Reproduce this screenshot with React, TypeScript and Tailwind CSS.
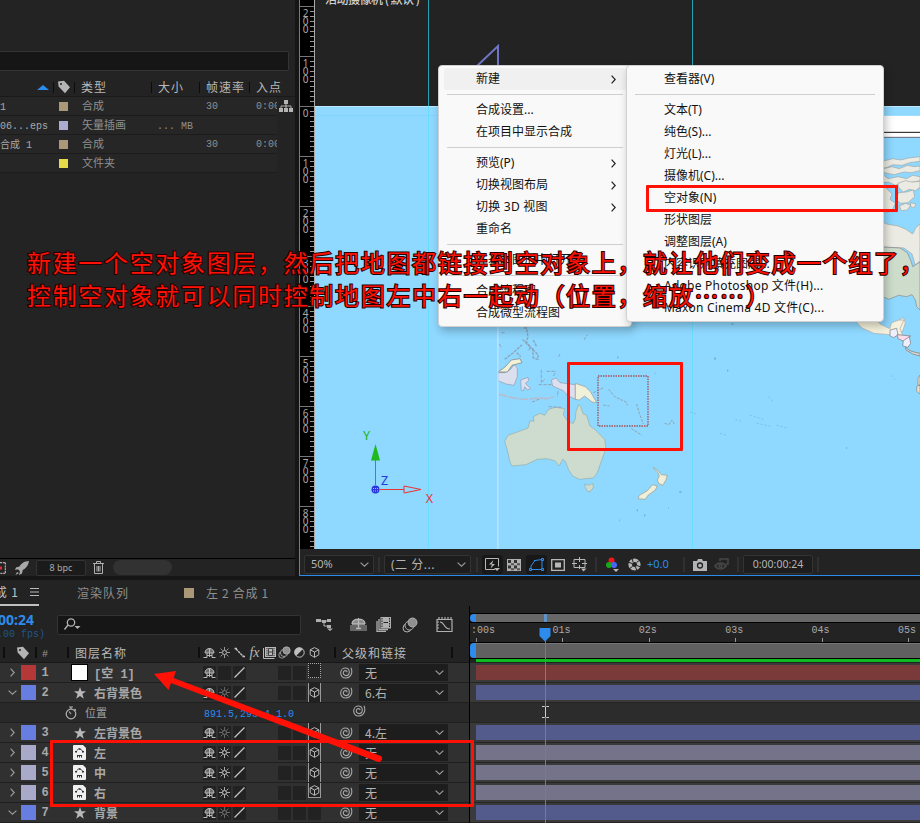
import React from "react";

const song = "font-['Liberation_Mono','Noto_Sans_CJK_SC',monospace]";
const ui = "font-['Noto_Sans','Noto_Sans_CJK_SC',sans-serif]";
const hei = "font-['Noto_Sans_CJK_SC',sans-serif]";

/* ---------- icons ---------- */

type IconProps = { className?: string };

const Tag = () => (
  <svg width="14" height="14" viewBox="0 0 14 14">
    <path d="M1 1.5 7 .8l6 6.4-5 6L1.6 6.5Z" fill="#b4b4b4" />
    <circle cx="4" cy="4" r="1" fill="#232323" />
  </svg>
);
const Shy = () => (
  <svg width="13" height="12" viewBox="0 0 13 12" className="shrink-0" fill="none" stroke="#b8b8b8">
    <path d="M2 6C2 0 11 0 11 6Z" fill="#6d6d6d" />
    <path d="M6.500 1v9M.5 10.500h3.500M4 8.500h5M9 10.500h3.500M4 10.500V6M9 10.500V6" />
  </svg>
);
const Sun = ({ className = "text-[#b8b8b8]" }: IconProps) => (
  <svg width="11" height="11" viewBox="0 0 11 11" fill="none" stroke="currentColor" className={className}>
    <circle cx="5.5" cy="5.5" r="2" />
    <path d="M5.5 0v3M5.5 8v3M0 5.5h3M8 5.5h3M1.6 1.6l2 2M7.4 7.4l2 2M9.4 1.6l-2 2M3.6 7.4l-2 2" strokeWidth=".8" />
  </svg>
);
const Slash = () => (
  <svg width="11" height="11" viewBox="0 0 11 11">
    <path d="M.5 10.5 10.5.5" stroke="#c4c4c4" strokeWidth="1.2" />
  </svg>
);
const BackSlash = () => (
  <svg width="11" height="11" viewBox="0 0 11 11">
    <path d="M.5 1.5h2.500M8.500 9.500h2.500M2 2l7.500 7.500" stroke="#c4c4c4" strokeWidth="1.4" strokeDasharray="2.500 .6" />
  </svg>
);
const Film = () => (
  <svg width="13" height="12" viewBox="0 0 13 12">
    <path d="M.5 1v10.500h11" stroke="#b8b8b8" fill="none" />
    <path d="M2 0h11v10H2Z" fill="#b8b8b8" />
    <path d="M4 1v8M11 1v8" stroke="#232323" strokeDasharray="1.300 1" />
    <path d="M5.500 5h4M5.500 1.500h4v7h-4Z" stroke="#232323" fill="none" strokeWidth=".8" />
  </svg>
);
const Blur = ({ className = "h-[13px] w-[13px]" }: IconProps) => (
  <svg viewBox="0 0 16 16" className={className} stroke="#b0b0b0" fill="#232323">
    <circle cx="5" cy="11" r="4" />
    <circle cx="7.500" cy="8.500" r="4.500" />
    <circle cx="10.500" cy="5.500" r="4.500" fill="#909090" />
  </svg>
);
const Adjust = () => (
  <svg width="11" height="11" viewBox="0 0 11 11">
    <circle cx="5.5" cy="5.5" r="4.700" stroke="#c0c0c0" fill="none" />
    <path d="M8.800 2.200A4.700 4.700 0 1 1 2.200 8.800Z" fill="#c0c0c0" transform="rotate(180 5.500 5.500)" />
  </svg>
);
const Cube = () => (
  <svg width="11" height="11" viewBox="0 0 11 11" fill="none" stroke="#b8b8b8" className="shrink-0">
    <path d="M5.500.6 9.800 2.800v5L5.500 10.300 1.200 7.800v-5ZM1.200 2.800 5.500 5l4.300-2.200M5.500 5v5.300" />
  </svg>
);
const Spiral = () => (
  <svg width="13" height="12" viewBox="0 0 13 12" fill="none" stroke="#a8a8a8" strokeWidth="1.100">
    <path d="M11 .8C13 5.500 11 10.800 6 11 2.500 11.200.6 8.800.7 5.800.8 2.800 3 1 5.400 1c2.400 0 4 1.800 3.900 4.200C9.200 7.400 7.800 8.700 6 8.600 4.300 8.500 3.200 7.300 3.300 5.700 3.400 4.300 4.400 3.500 5.500 3.600c1 .1 1.600.9 1.500 1.700" />
  </svg>
);
const Chevron = ({ className = "text-[#999]" }: IconProps) => (
  <svg width="9" height="5" viewBox="0 0 9 5" fill="none" stroke="currentColor" strokeWidth="1.200" className={className}>
    <path d="m.6.6 3.900 3.600L8.400.6" />
  </svg>
);
const ChevronR = ({ className = "text-[#999]" }: IconProps) => (
  <svg width="5" height="9" viewBox="0 0 5 9" fill="none" stroke="currentColor" strokeWidth="1.200" className={className}>
    <path d="m.6.600 3.600 3.900L.6 8.400" />
  </svg>
);
const Star = () => (
  <svg width="12" height="12" viewBox="0 0 12 12">
    <path d="m6 0 1.500 4.200H12L8.400 7l1.400 4.700L6 8.900l-3.800 2.800L3.600 7 0 4.200h4.500Z" fill="#b8b8b8" />
  </svg>
);
const Eps = () => (
  <svg width="13" height="15" viewBox="0 0 13 15">
    <path d="M0 1a1 1 0 0 1 1-1h9l3 3v11a1 1 0 0 1-1 1H1a1 1 0 0 1-1-1Z" fill="#f0f0f0" />
    <path d="M3 8C3 3 10 3 10 8M2 6.500h2M9 6.500h2M5.500 3.700h2" stroke="#333" fill="none" strokeDasharray="2 .5" />
    <path d="M4.500 12.500V10M6.500 12.500V10M8.500 12.500V10M4 10.500h5" stroke="#333" fill="none" />
  </svg>
);
const Stopwatch = () => (
  <svg width="12" height="14" viewBox="0 0 12 14" fill="none" stroke="#b0b0b0" strokeWidth="1.200">
    <circle cx="6" cy="8" r="4.800" />
    <path d="M4 1h4M6 1v2M6 8 4 5.500M9.500 3l1.500 1.500" />
  </svg>
);

/* ---------- project panel ---------- */

const assets = [
  { name: "1", color: "bg-[#ab9877]", type: "合成", size: "", fps: "30", start: "0:00" },
  { name: "06...eps", color: "bg-[#acacd0]", type: "矢量插画", size: "... MB", fps: "", start: "" },
  { name: "合成 1", color: "bg-[#ab9877]", type: "合成", size: "", fps: "30", start: "0:00" },
  { name: "", color: "bg-[#e6da4b]", type: "文件夹", size: "", fps: "", start: "" },
];

function ProjectPanel() {
  return (
    <div className="flex h-[576px] w-[295px] flex-col bg-[#232323]">
      <div className="mt-[51px] h-[20px] w-[289px] rounded-r-[2px] border border-l-0 border-[#343434] bg-[#161616]" />
      <div className={`mt-[7px] flex h-[19px] items-center border-b border-[#1a1a1a] text-[12px] tracking-[1px] text-[#b8b8b8] ${hei}`}>
        <div className="flex w-[53px] justify-end pr-[4px]">
          <svg width="12" height="5" viewBox="0 0 12 5"><path d="M0 5 6 0l6 5Z" fill="#2d8ceb" /></svg>
        </div>
        <div className="flex h-[11px] w-[22px] items-center justify-center border-x border-[#0c0c0c]"><Tag /></div>
        <div className="w-[76px] pl-[6px]">类型</div>
        <div className="flex h-[11px] w-[48px] items-center border-l border-[#0c0c0c] pl-[6px]">大小</div>
        <div className="flex h-[11px] w-[50px] items-center border-l border-[#0c0c0c] pl-[6px] whitespace-nowrap">帧速率</div>
        <div className="flex h-[11px] items-center border-l border-[#0c0c0c] pl-[6px]">入点</div>
      </div>
      <div className="flex h-[387px]">
        <div className="w-[277px]">
          {assets.map((a, i) => (
            <div key={i} className={`flex h-[19px] items-center overflow-hidden border-b border-[#1c1c1c] bg-[#262626] text-[10px] text-[#8f8f8f] ${song}`}>
              <div className="w-[59px] pt-[2px] whitespace-pre text-[#a8a8a8]">{a.name}</div>
              <div className={`h-[9px] w-[9px] ${a.color}`} />
              <div className="w-[89px] pt-[3px] pl-[14px] text-[11px]">{a.type}</div>
              <div className="w-[49px] pt-[2px] whitespace-pre">{a.size}</div>
              <div className="w-[50px]">{a.fps}</div>
              <div className="w-[21px] overflow-hidden">{a.start}</div>
            </div>
          ))}
        </div>
        <svg width="14" height="13" viewBox="0 0 14 13" className="mt-[3px] ml-[2px]" fill="#b4b4b4">
          <path d="M5 0h4v4H5ZM0 8h4v4H0ZM5 8h4v4H5ZM10 8h4v4h-4Z" />
          <path d="M7 4v4M2 8V6h10v2" stroke="#b4b4b4" fill="none" />
        </svg>
      </div>
      <div className="mt-[74px] flex h-[18px] items-center border-t border-black">
        <svg width="6" height="12" viewBox="0 0 6 12"><path d="M0 .5h5.500v11H0" fill="none" stroke="#b0b0b0" strokeWidth="1.500" strokeDasharray="2 .8" /><path d="M0 4.500h2v3H0Z" fill="#e03030" /></svg>
        <svg width="14" height="14" viewBox="0 0 14 14" className="ml-[9px]" fill="#a8a8a8"><path d="M14 0C9 0 6 3 4.500 5.500L1 6.500 0 9l3-.8 2 2.300L4 14l3-1.500.8-3.500C11 7.500 13.500 4 14 0ZM2 11l-1.500 3L4 12Z" /></svg>
        <div className={`ml-[7px] flex h-[16px] w-[50px] items-center justify-center rounded-[2px] border border-[#333] bg-[#1b1b1b] text-[9px] text-[#a8a8a8] ${ui}`}>8 bpc</div>
        <svg width="11" height="13" viewBox="0 0 11 13" className="ml-[7px]" fill="none" stroke="#b0b0b0"><path d="M0 2.500h11M3.500 2.500v-2h4v2M1.500 2.500v10h8v-10M4 5v5.500M5.500 5v5.500M7 5v5.500" /></svg>
        <div className="ml-[9px] h-[15px] w-[59px] rounded-full bg-[#323232]" />
      </div>
    </div>
  );
}

/* ---------- viewer ---------- */

const rulerMarks = ["200", "100", "0", "100", "200", "300", "400", "500", "600", "700", "800"];

function Ruler() {
  return (
    <div className={`h-[549px] w-[15px] shrink-0 overflow-hidden border-r border-[#aaa] bg-black text-[10px] leading-[8px] text-[#a8a8a8] ${ui}`}>
      <div className="h-[6px]" />
      {rulerMarks.map((m, i) => (
        <div key={i} className="flex h-[50px] justify-between border-t border-[#777]">
          <div className="flex w-[10px] flex-col items-center pt-[2px] pl-[1px]">
            {m.split("").map((c, j) => (
              <span key={j}>{c}</span>
            ))}
          </div>
          <div className="w-[4px]">
            {[1, 2, 3, 4, 5, 6, 7, 8, 9].map((n) => (
              <div key={n} className="mt-[4px] h-px bg-[#999]" />
            ))}
          </div>
        </div>
      ))}
    </div>
  );
}

function WorldMap() {
  return (
    <svg width="605" height="549" viewBox="315 0 605 549" className="block">
      <rect x="315" width="605" height="106" fill="#232323" />
      <rect x="315" y="106" width="605" height="443" fill="#8fd8ff" />
      <path d="M315 106.500h605" stroke="#bfe8ff" />
      <path d="M315 115.500h605" stroke="#82d4fb" />
      <g transform="translate(610 50) scale(.33333)">
        <path d="M810 197H930V262H810Z" fill="#fff" />
        <path d="M810 247h120" stroke="#111" strokeWidth="3" />
        <path d="M810 262h120" stroke="#667" strokeWidth="3" />
        <g fill="#ecebe3" stroke="#a3a6a4" strokeWidth="2" strokeLinejoin="round">
          <path d="m800 340 24-8 25-6 22 4 26-6 33-4v14l-30 4-24 8-26-2-24 10-26-4Z" />
          <path d="m820 356 26-6 22 6 24-10 20 4 18-2v14l-26 6-22-2-30 8-30-6Z" />
          <path d="m800 372 22 4 12 10 30-6 26 6 18-10 22 4v12l-30 6-18-2-26 10-20-10-36 4Z" />
          <path d="m864 400 22-8 20 4 24-2v18l-14 10-18-4-18 8-14-14Z" />
          <path d="m800 404 26 8 20 20-6 16 16 12-10 22-20 6-26-8Z" />
          <path d="m858 448 8-20 24-2 20-6 4 20-20 18-22 2Z" />
          <path d="m868 468 20-8 14 6-10 14-18 2ZM902 458l16 4-6 12-10-4Z" />
          <path d="m800 508 30 14 34 6 24 10 20 14 10-20 12-10v110l-14 14-10-34-24-18-82-4Z" />
        </g>
        <path d="m800 590 70 4 22 14 12 28 4 14 22-14v144l-10-10-4-20-10-16-16 6-24-4-30 12-36-16Z" fill="#cddccb" stroke="#888" strokeWidth="2" />
        <path d="m740 790 36 4 24 26 36 18h34l-10-22 20-14 6 16-8 26-26 4-56-4-34-20Z" fill="#f5f1dc" stroke="#aaa" strokeWidth="2" />
      </g>
      <g transform="translate(490 320) scale(.33333)" strokeLinejoin="round">
        <path d="M1097 4h66l8 8 28 14 6-18 22-8h15l-12 26 8 20-38-2-48-4-36-16Z" fill="#f5f1dc" stroke="#aaa" strokeWidth="2" />
        <path d="m1200 30 20-5 4 20-14 8-10-6Z" fill="#eef" stroke="#777" strokeWidth="2" />
        <path d="m1222 44 40 4-20 16-18-8Z" fill="#fbdcec" stroke="#777" strokeWidth="2" />
        <path d="m1240 62 18-12 4 20-8 12-16-4Z" fill="#eef" stroke="#777" strokeWidth="2" />
        <path d="m1246 82 14 10 12 4 18 4v8l-22-6-20-12Z" fill="#ddd5cf" stroke="#777" strokeWidth="2" />
        <path d="m1284 175 6-10v32l-6-2ZM1280 200l10-6v28l-10-8Z" fill="#eadfce" stroke="#888" strokeWidth="2" />
        <path d="m54 346 34-12 26-10 6-22 12 2-2-14 20-10 14 6 12-18 20-6 28 4-4 18 14 22 16 4 6-14 2-22 8-20 6 6 8 22 10 4 10 32 14 10 30 30 4 28-12 32-14 40-12 16-42 4-20-10-12-18-10-26-8-6-10 20-14-16-24-6-28 2-34 16-42 4-6-12-8-36-8-26Z" fill="#cddccf" stroke="#96aca6" strokeWidth="2" />
        <path d="m284 492 12 4 12-6 2 12-8 12h-10l-6-12Z" fill="#cddccf" stroke="#96aca6" strokeWidth="2" />
        <path d="m490 442 14 10 10 12 18 2-4 14-10 16-12-6-4-10 6-12-4-10-14-14ZM488 494l14 4-6 12-22 16-8 12-22-2 4-10 24-14Z" fill="#efeed8" stroke="#9a9a88" strokeWidth="2" />
        <path d="M24 158h20l18-10 10-14 10 10v26l-10 26-24-4-24-10ZM92 180l22-8 2 10-10 8 16 16-10 4-8-10-4 12h-6ZM184 180l14-6 12 14 46 6v44l-24-12-12-14-32-14Z" fill="#dcdfed" stroke="#9499ad" strokeWidth="2" />
        <path d="m24 222 30 8 30 6 28 2 30-4 30 2 20-6" stroke="#b5bdce" strokeWidth="5" fill="none" strokeDasharray="28 4" />
        <path d="M256 190l30 10 16 16 18 32-14-2-22-18-16 12-12-2Z" fill="#f1f0d8" stroke="#999" strokeWidth="2" />
        <path d="m24 156 20-14 20-22 26-4 6 12-30 8-14 20Z" fill="#f1f0d8" stroke="#777" strokeWidth="2" />
        <path d="m102 24 8 0 4 28-6 12 14 18-8 10M128 88l16 16v14l-14-4ZM98 58l14 16 18 14M44 118l26-20 26-24M80 98l12 12M130 60l10 20" fill="none" stroke="#8ba4b9" strokeWidth="4" strokeDasharray="9 3" />
        <path d="M154 150v38l10-10M146 194h38M190 168l8-14M204 214l-2 16M126 246l26-10M170 154h26M34 38h14M28 72l6 10M282 60l10-16M206 110l4-8M176 260l38 2" fill="none" stroke="#8fa3b9" strokeWidth="3" strokeDasharray="10 4" />
        <path d="m310 218 30-14M356 208l18 22 34 16 4 10M440 252l8 28 12 32M424 326l32 20M524 310l12 4 10-14 8 14M340 255l18 3" fill="none" stroke="#8fa2a8" strokeWidth="3" strokeDasharray="8 4" />
        <path d="m600 276 20 6M736 298l18 6M780 286l40 12M800 310l40 8M836 230l14 18M690 340l20 6M860 316l30 8M1204 166l12 14" stroke="#83bddf" strokeWidth="3" strokeDasharray="6 6" />
        <path d="M381 112h4M672 116h6M711 152h4M568 516h6M440 571h4M462 586h4M388 601h2M1068 384h3M535 564h2M494 160h2M724 12h6" stroke="#7aa9c0" strokeWidth="5" />
        <path d="M23.500 18v670" stroke="#c5e4ff" strokeWidth="5" opacity=".8" />
      </g>
      <path d="M428.500 0v106M692.500 0v106" stroke="#23a3b2" />
      <path d="M428.500 106v443M692.500 106v443" stroke="#69dcff" />
      <path d="m477 66 21-20v20" fill="none" stroke="#6d76c4" strokeWidth="2" />
      <rect x="598" y="376" width="50" height="50" fill="none" stroke="#a5505c" strokeDasharray="1.500 1" strokeWidth="1.300" />
      <g fill="none">
        <path d="M375.500 485v-27" stroke="#1bb41b" />
        <path d="M375.500 444 371 460.500h9Z" fill="#1fb81f" />
        <path d="M380 489.500h24M404 486l17 3.500-17 3.500Z" stroke="#e83434" />
        <circle cx="375.500" cy="489.500" r="4" fill="#2a35e0" />
        <path d="M373 488.500h5M373 491h5" stroke="#9cc6ff" strokeDasharray="1 1" />
      </g>
      <g className={ui} fontSize="12.500" textAnchor="middle">
        <text x="366.500" y="440" fill="#1bb41b">Y</text>
        <text x="384.500" y="485" fill="#2a35e0">Z</text>
        <text x="429.500" y="503" fill="#e83434">X</text>
      </g>
      <text x="325" y="4" fontSize="12" fontWeight="500" textLength="95" fill="#d0d0d0" className={hei}>活动摄像机 ( 默认 )</text>
    </svg>
  );
}

const Sep = ({ className = "" }: IconProps) => <div className={`h-[15px] w-[2px] shrink-0 bg-[#303030] ${className}`} />;

function ViewerBar() {
  return (
    <div className={`flex h-[26px] items-center pt-[5px] pl-[4px] text-[11px] text-[#b4b4b4] ${ui}`}>
      <div className="flex h-[19px] w-[70px] shrink-0 items-center justify-between rounded-[2px] border border-[#333] bg-[#1d1d1d] pr-[4px] pl-[6px]">50%<Chevron /></div>
      <Sep className="ml-[4px]" />
      <div className="ml-[4px] flex h-[19px] w-[87px] shrink-0 items-center justify-between rounded-[2px] border border-[#333] bg-[#1d1d1d] pr-[4px] pl-[6px] text-[12px]"><span className="tracking-[.5px]">(二 分...</span><Chevron /></div>
      <Sep className="ml-[5px]" />
      <div className="ml-[4px] flex h-[19px] w-[21px] shrink-0 items-center justify-center rounded-[2px] bg-[#181818]">
        <svg width="15" height="14" viewBox="0 0 15 14"><path d="M10 11.500H.5V.5h13v8" fill="none" stroke="#b8b8b8" /><path d="M8.500 2 4 6.500h3L5.500 10.500 10 6H7Z" fill="#b8b8b8" /><path d="m9 10 3 3 3-3Z" fill="#b8b8b8" /></svg>
      </div>
      <svg width="14" height="12" viewBox="0 0 14 12" className="ml-[4px] shrink-0"><rect width="14" height="12" fill="#b0b0b0" /><path d="M1 2.500h12M1 8h12" stroke="#333" strokeWidth="2.800" strokeDasharray="3 3" /><path d="M4 5.200h9M4 10.300h9" stroke="#555" strokeWidth="2" strokeDasharray="3 3" /></svg>
      <div className="ml-[5px] flex h-[19px] w-[21px] shrink-0 items-center justify-center rounded-[2px] bg-[#181818]">
        <svg width="15" height="13" viewBox="0 0 15 13" fill="none" stroke="#2d8ceb"><path d="M2 11.500V8L6 2.500 13 1.500v10Z" /><path d="M.5 10.500h2v2h-2ZM12.500.5h2v2h-2ZM12.500 10.500h2v2h-2ZM5 2.500h1.500" /></svg>
      </div>
      <svg width="14" height="12" viewBox="0 0 14 12" className="ml-[4px] shrink-0"><path d="M.7.700h12.600v10.600H.700Z" stroke="#b8b8b8" strokeWidth="1.300" fill="none" /><path d="M4 3.500h6v5H4Z" fill="#b8b8b8" /></svg>
      <svg width="16" height="15" viewBox="0 0 16 15" className="ml-[7px] shrink-0"><path d="M2 2.500h11v8H2ZM7.500 0v5M7.500 8v4M0 6.500h5M10 6.500h5" fill="none" stroke="#b8b8b8" /><path d="m9 11.500 2.500 3 3-3Z" fill="#b8b8b8" /></svg>
      <Sep className="ml-[7px]" />
      <svg width="13" height="15" viewBox="0 0 13 15" className="ml-[9px] shrink-0"><circle cx="5.500" cy="3.500" r="3" fill="#f01818" /><circle cx="3" cy="8" r="3" fill="#18a818" /><circle cx="8" cy="8" r="3" fill="#4866f8" /><path d="m7 12 3 3 3-3Z" fill="#b8b8b8" /></svg>
      <svg width="13" height="13" viewBox="0 0 13 13" className="ml-[9px] shrink-0"><circle cx="6.500" cy="6.500" r="4.300" fill="none" stroke="#b4b4b4" strokeWidth="3.600" /><path d="m4 0 1 4M12 2 8.500 4.500M13 9 8.800 7.500M9 13 7.500 9M1 11l3.500-2.500M0 4l4 1.500" stroke="#222" /></svg>
      <div className="ml-[6px] w-[34px] shrink-0 text-[#2d8ceb]">+0.0</div>
      <Sep className="ml-[2px]" />
      <svg width="14" height="12" viewBox="0 0 14 12" className="ml-[8px] shrink-0"><path d="M0 2h4l1-2h4l1 2h4v10H0Z" fill="#b4b4b4" /><circle cx="7" cy="6.500" r="2.500" fill="none" stroke="#232323" strokeWidth="1.300" /></svg>
      <svg width="15" height="13" viewBox="0 0 15 13" className="ml-[7px] shrink-0" fill="none" stroke="#474747" strokeWidth="1.500"><path d="M1 8c3-4 8-4 11 0-3 4-8 4-11 0Z" /><circle cx="6.500" cy="8" r="1.500" /><path d="M6 3V1h8v5h-2" /></svg>
      <Sep className="ml-[8px]" />
      <div className="ml-[4px] flex h-[19px] w-[70px] shrink-0 items-center justify-center rounded-[2px] border border-[#333] bg-[#1d1d1d] text-[10.500px]">0:00:00:24</div>
      <Sep className="ml-[4px]" />
    </div>
  );
}

function Viewer() {
  return (
    <div className="flex h-[576px] w-[621px] shrink-0 flex-col border-b border-l border-[#2d8ceb] bg-[#232323]">
      <div className="flex"><Ruler /><WorldMap /></div>
      <ViewerBar />
    </div>
  );
}

/* ---------- timeline ---------- */

type Layer = {
  n: number; name: string; icon: "null" | "star" | "eps"; open?: boolean; color: string;
  bar: string; parent: string; sun: "none" | "dim" | "on"; cube: string; prop?: boolean;
};

const layers: Layer[] = [
  { n: 1, name: "[空 1]", icon: "null", color: "bg-[#b53838]", bar: "bg-[#7b3a3a]", parent: "无", sun: "none", cube: "border border-dotted border-[#aaa]" },
  { n: 2, name: "右背景色", icon: "star", open: true, color: "bg-[#677de0]", bar: "bg-[#525b8c]", parent: "6.右", sun: "dim", cube: "border-x border-[#999]", prop: true },
  { n: 3, name: "左背景色", icon: "star", color: "bg-[#677de0]", bar: "bg-[#525b8c]", parent: "4.左", sun: "dim", cube: "border-x border-[#999]" },
  { n: 4, name: "左", icon: "eps", color: "bg-[#a9a9ca]", bar: "bg-[#75738a]", parent: "无", sun: "on", cube: "border-x border-[#999]" },
  { n: 5, name: "中", icon: "eps", color: "bg-[#a9a9ca]", bar: "bg-[#75738a]", parent: "无", sun: "on", cube: "border-x border-[#999]" },
  { n: 6, name: "右", icon: "eps", color: "bg-[#a9a9ca]", bar: "bg-[#75738a]", parent: "无", sun: "on", cube: "border-x border-b border-[#999]" },
  { n: 7, name: "背景", icon: "star", open: true, color: "bg-[#677de0]", bar: "bg-[#525b8c]", parent: "无", sun: "dim", cube: "" },
];

const Cell = ({ children, boxed = true, className = "h-[14px]" }: { children?: React.ReactNode; boxed?: boolean; className?: string }) => (
  <div className={`mr-[2px] flex w-[13px] shrink-0 items-center justify-center ${boxed ? "bg-[#222]" : ""} ${className}`}>{children}</div>
);

function LayerRow({ l }: { l: Layer }) {
  return (
    <>
      <div className="flex h-[20px] items-center border-b border-[#1f1f1f] bg-[#303030]">
        <div className="flex w-[21px] justify-center pl-[4px]">{l.open ? <Chevron /> : <ChevronR />}</div>
        <div className={`h-[15px] w-[15px] ${l.color}`} />
        <div className={`w-[18px] pt-[1px] text-center text-[12px] font-bold text-[#a8a8a8] ${song}`}>{l.n}</div>
        <div className="ml-[17px] flex w-[17px] justify-center">
          {l.icon === "null" ? <div className="h-[17px] w-[17px] border border-black bg-white" /> : l.icon === "star" ? <Star /> : <Eps />}
        </div>
        <div className={`ml-[6px] w-[109px] pt-[4px] text-[12px] leading-[16px] font-bold whitespace-pre text-[#a8a8a8] ${song}`}>{l.name}</div>
        <Cell><Shy /></Cell>
        <Cell>{l.sun !== "none" && <Sun className={l.sun === "dim" ? "text-[#777]" : "text-[#ccc]"} />}</Cell>
        <Cell><Slash /></Cell>
        <Cell boxed={false} /><Cell boxed={false} />
        <Cell /><Cell />
        <Cell className={l.cube ? `${l.n === 1 || l.n === 6 ? "h-[15px] self-start" : "h-[19px]"} ${l.cube}` : "h-[14px]"}>{l.cube && l.n > 1 && <Cube />}</Cell>
        <div className="w-[36px] pl-[17px]"><Spiral /></div>
        <div className={`flex h-[17px] w-[89px] items-center justify-between bg-[#1d1d1d] pr-[4px] pl-[6px] text-[12px] text-[#b4b4b4] ${hei}`}>{l.parent}<Chevron /></div>
      </div>
      {l.prop && (
        <div className={`flex h-[20px] items-center border-b border-[#1f1f1f] bg-[#292929] text-[11px] text-[#a0a0a0] ${song}`}>
          <div className="flex w-[85px] justify-end pr-[8px]"><Stopwatch /></div>
          <div className="w-[119px] pt-[3px]">位置</div>
          <div className="w-[149px] pt-[3px] text-[10px] text-[#2d8ceb]">891.5,293.4,1.0</div>
          <div className="pb-[4px]"><Spiral /></div>
        </div>
      )}
    </>
  );
}

const ColSep = () => <div className="h-[11px] w-[2px] shrink-0 bg-[#0e0e0e]" />;

function LayerList() {
  return (
    <div className="h-[217px] w-[470px] shrink-0 border-r border-black">
      <div className="flex h-[37px] items-center">
        <div className="flex w-[57px] flex-col items-start pt-[3px]">
          <div className={`w-[34px] overflow-hidden text-[14px] leading-[15px] font-bold text-[#2d8ceb] ${ui}`}><div className="flex justify-end">0:00:00:24</div></div>
          <div className={`mt-[1px] flex w-[45px] justify-end overflow-hidden text-[10px] leading-[13px] whitespace-pre text-[#20558a] ${song}`}>(30.00 fps)</div>
        </div>
        <div className="flex h-[20px] w-[244px] items-center rounded-[2px] border border-[#333] bg-[#161616] pl-[6px]">
          <svg width="17" height="13" viewBox="0 0 17 13"><circle cx="7" cy="4.500" r="3.700" fill="none" stroke="#b4b4b4" strokeWidth="1.300" /><path d="M4 7 .5 11.500" stroke="#b4b4b4" strokeWidth="1.300" /><path d="m10.500 8 3 3 3-3Z" fill="#b4b4b4" /></svg>
        </div>
        <svg width="17" height="13" viewBox="0 0 17 13" className="ml-[15px]" fill="#b0b0b0"><path d="M0 1h5v3H0ZM6 2h4v3H6ZM11 1h4v3h-4ZM11 7h4v3h-4ZM11 10.500h6l-3 2.500Z" /><path d="M4 3h7M8 3v5h3" stroke="#b0b0b0" fill="none" /></svg>
        <svg width="17" height="13" viewBox="0 0 17 13" className="ml-[17px]"><path d="M0 7h17v6H0Z" fill="#666" /><path d="M2 6C2-.5 15-.5 15 6Z" fill="#8a8a8a" /><path d="M2 6C2-.5 15-.5 15 6M8.500 0v10M2 6h13M6 10.500h5" stroke="#b8b8b8" fill="none" strokeWidth="1.300" /></svg>
        <svg width="15" height="15" viewBox="0 0 15 15" className="ml-[9px]"><path d="M1 4v10.500h9M3 2v10.500h9" stroke="#b0b0b0" fill="none" strokeWidth="1.300" /><path d="M4.500 0H15v11.500H4.500Z" fill="#b0b0b0" /><path d="M6 1v10M13.500 1v10" stroke="#232323" strokeDasharray="1.500 1" /><path d="M7.500 5.500h4.500" stroke="#232323" /></svg>
        <div className="ml-[11px]"><Blur className="h-[16px] w-[16px]" /></div>
        <svg width="17" height="16" viewBox="0 0 17 16" className="ml-[18px]" fill="none" stroke="#b0b0b0" strokeWidth="1.200"><path d="M1 2.500h15v12H1ZM3 0v2.500M6 0v2.500M9 0v2.500M12 0v2.500M15 0v2.500M1 5h2M1 8h2M1 11h2M4 5c5 0 3 7 10 7" /></svg>
      </div>
      <div className="flex h-[20px] items-center border-b border-[#181818]">
        <div className="w-[3px]" /><ColSep />
        <div className="flex w-[30px] justify-center pl-[6px]"><Tag /></div><ColSep />
        <div className={`w-[30px] pt-[3px] pl-[5px] text-[10px] text-[#999] ${song}`}>#</div><ColSep />
        <div className={`w-[129px] pl-[6px] text-[12px] tracking-[1px] text-[#b8b8b8] ${hei}`}>图层名称</div><ColSep />
        <div className="w-[3px]" />
        <Cell boxed={false}><Shy /></Cell>
        <Cell boxed={false}><Sun /></Cell>
        <Cell boxed={false}><BackSlash /></Cell>
        <Cell boxed={false}><span className="font-['Liberation_Serif',serif] text-[14px] text-[#b8b8b8] italic">fx</span></Cell>
        <Cell boxed={false}><Film /></Cell>
        <Cell boxed={false}><Blur /></Cell>
        <Cell boxed={false}><Adjust /></Cell>
        <Cell boxed={false}><Cube /></Cell>
        <div className="w-[11px]" /><ColSep />
        <div className={`w-[115px] pl-[6px] text-[12px] tracking-[1px] text-[#b8b8b8] ${hei}`}>父级和链接</div><ColSep />
      </div>
      {layers.map((l) => <LayerRow key={l.n} l={l} />)}
    </div>
  );
}

function Tracks() {
  return (
    <div className="relative h-[217px] w-[450px] overflow-hidden">
      <div className="mt-[7px] flex h-[10px] border-y border-black">
        <div className="w-[6px] rounded-l-full bg-[#2d8ceb]" />
        <div className="flex-1 bg-[#676767]" />
      </div>
      <div className={`flex h-[19px] pl-[6px] text-[10px] text-[#aaa] ${song}`}>
        {[":00s", "01s", "02s", "03s", "04s", "05s"].map((t, i) => (
          <div key={t} className="flex w-[86.4px] shrink-0 flex-col justify-between">
            <span className={i === 0 ? "-ml-[5px] leading-[15px]" : "-ml-[10px] leading-[15px]"}>{t}</span>
            <div className={i === 0 ? "h-[6px] w-px bg-[#888]" : "h-[4px] w-px bg-[#999]"} />
          </div>
        ))}
      </div>
      <div className="flex h-[17px] border-y border-black">
        <div className="w-[6px] rounded-l-[4px] bg-[#2d8ceb]" />
        <div className="flex-1 border-t border-[#777] bg-[#606060]" />
      </div>
      <div className="ml-[6px] h-[3px] bg-[#0db821]" />
      <div className="h-px bg-[#222]" />
      {layers.map((l) => (
        <React.Fragment key={l.n}>
          <div className="h-[20px] border-b border-[#252525] bg-[#3a3a3a] pt-[2px] pl-[6px]">
            <div className={`h-[15px] ${l.bar}`} />
          </div>
          {l.prop && <div className="h-[20px] border-b border-[#252525] bg-[#2c2c2c]" />}
        </React.Fragment>
      ))}
      <svg width="12" height="210" viewBox="0 0 12 210" className="absolute top-[7px] left-[69px]">
        <path d="M6.500 1v8" stroke="#5e92c9" strokeWidth="3" />
        <path d="M.5 15h11v8l-5.500 5.500L.5 23Z" fill="#2d8ceb" />
        <path d="M6.500 22v35" stroke="#2d8ceb" />
        <path d="M6.500 56v154" stroke="#777b91" />
        <path d="M3 93.500h2.500l1 1 1-1H10M3 104.500h2.500l1-1 1 1H10M6.500 94v10" fill="none" stroke="#ccc" />
      </svg>
    </div>
  );
}

function Timeline() {
  return (
    <div className="mt-[4px] h-[243px] bg-[#232323]">
      <div className={`flex h-[26px] items-center text-[12px] tracking-[1px] text-[#909090] ${hei}`}>
        <div className="flex h-full w-[39px] items-center justify-between border-b-2 border-[#c0c0c0] text-[#c0c0c0]">
          <span className="flex w-[22px] justify-end overflow-hidden pr-[3px] whitespace-pre">成 1</span>
          <svg width="9" height="8" viewBox="0 0 9 8"><path d="M0 .5h9M0 4h9M0 7.500h9" stroke="#b8b8b8" /></svg>
        </div>
        <div className="ml-[38px] w-[107px]">渲染队列</div>
        <div className="h-[10px] w-[10px] bg-[#ab9877]" />
        <div className="ml-[12px] tracking-[.7px]">左 2 合成 1</div>
      </div>
      <div className="flex"><LayerList /><Tracks /></div>
    </div>
  );
}

/* ---------- context menus ---------- */

type Item = { t: string; sub?: boolean; hot?: boolean; wide?: boolean } | null;

const mainMenu: Item[] = [
  { t: "新建", sub: true, hot: true }, null,
  { t: "合成设置..." }, { t: "在项目中显示合成" }, null,
  { t: "预览(P)", sub: true }, { t: "切换视图布局", sub: true }, { t: "切换 3D 视图", sub: true, wide: true }, { t: "重命名" }, null,
  { t: "在基本图形中打开" }, null,
  { t: "合成流程图" }, { t: "合成微型流程图" },
];
const newMenu: Item[] = [
  { t: "查看器(V)" }, null,
  { t: "文本(T)" }, { t: "纯色(S)..." }, { t: "灯光(L)..." }, { t: "摄像机(C)..." }, { t: "空对象(N)" },
  { t: "形状图层" }, { t: "调整图层(A)" }, { t: "内容识别填充图层..." },
  { t: "Adobe Photoshop 文件(H)...", wide: true }, { t: "Maxon Cinema 4D 文件(C)...", wide: true },
];

function Menu({ items, className }: { items: Item[]; className: string }) {
  return (
    <div className={`absolute top-[65px] rounded-[4px] border border-[#d0d0d0] bg-[#f9f9f9] px-[5px] py-[2px] text-[12px] text-[#111] shadow-[2px_4px_8px_rgba(0,0,0,0.25)] ${ui} ${className}`}>
      {items.map((it, i) =>
        it ? (
          <div key={i} className={`flex h-[22px] items-center justify-between rounded-[3px] pr-[10px] pl-[32px] whitespace-nowrap ${it.hot ? "bg-[#f0f0f0]" : ""} ${it.wide ? "tracking-[.24px]" : ""}`}>
            {it.t}
            {it.sub && <ChevronR className="text-[#222]" />}
          </div>
        ) : (
          <div key={i} className="mx-[3px] flex h-[9px] items-center"><div className="h-px w-full bg-[#cfcfcf]" /></div>
        )
      )}
    </div>
  );
}

export default function App() {
  return (
    <div className="relative h-[823px] w-[920px] overflow-hidden bg-[#161616]">
      <div className="flex h-[576px] justify-between"><ProjectPanel /><Viewer /></div>
      <Timeline />
      <Menu items={mainMenu} className="left-[438px] w-[194px]" />
      <Menu items={newMenu} className="left-[626px] w-[258px]" />
      <div className="absolute top-[184.500px] left-[646px] h-[27px] w-[252px] rounded-[1px] border-[3px] border-[#ff1205]" />
      <div className="absolute top-[362px] left-[567px] h-[89px] w-[116px] rounded-[1px] border-[3px] border-[#ff1205]" />
      <div className="absolute top-[740px] left-[50px] h-[67px] w-[424px] rounded-[1px] border-[3px] border-[#ff1205]" />
      <svg width="240" height="100" viewBox="150 665 240 100" className="absolute top-[665px] left-[150px]" fill="#ff1205">
        <path d="m154 674 22-3-2.500 7L381 756a3.500 3.500 0 0 1-3 6L171 683l-2.500 7Z" />
      </svg>
      <div className={`absolute top-[245px] left-[27px] text-[24px] leading-[33px] font-normal tracking-[1.670px] whitespace-nowrap text-[#ff1205] [-webkit-text-stroke:2px_#240000] [paint-order:stroke_fill] ${hei}`}>
        <div>新建一个空对象图层，然后把地图都链接到空对象上，就让他们变成一个组了，</div>
        <div>控制空对象就可以同时控制地图左中右一起动（位置，缩放……）</div>
      </div>
    </div>
  );
}
